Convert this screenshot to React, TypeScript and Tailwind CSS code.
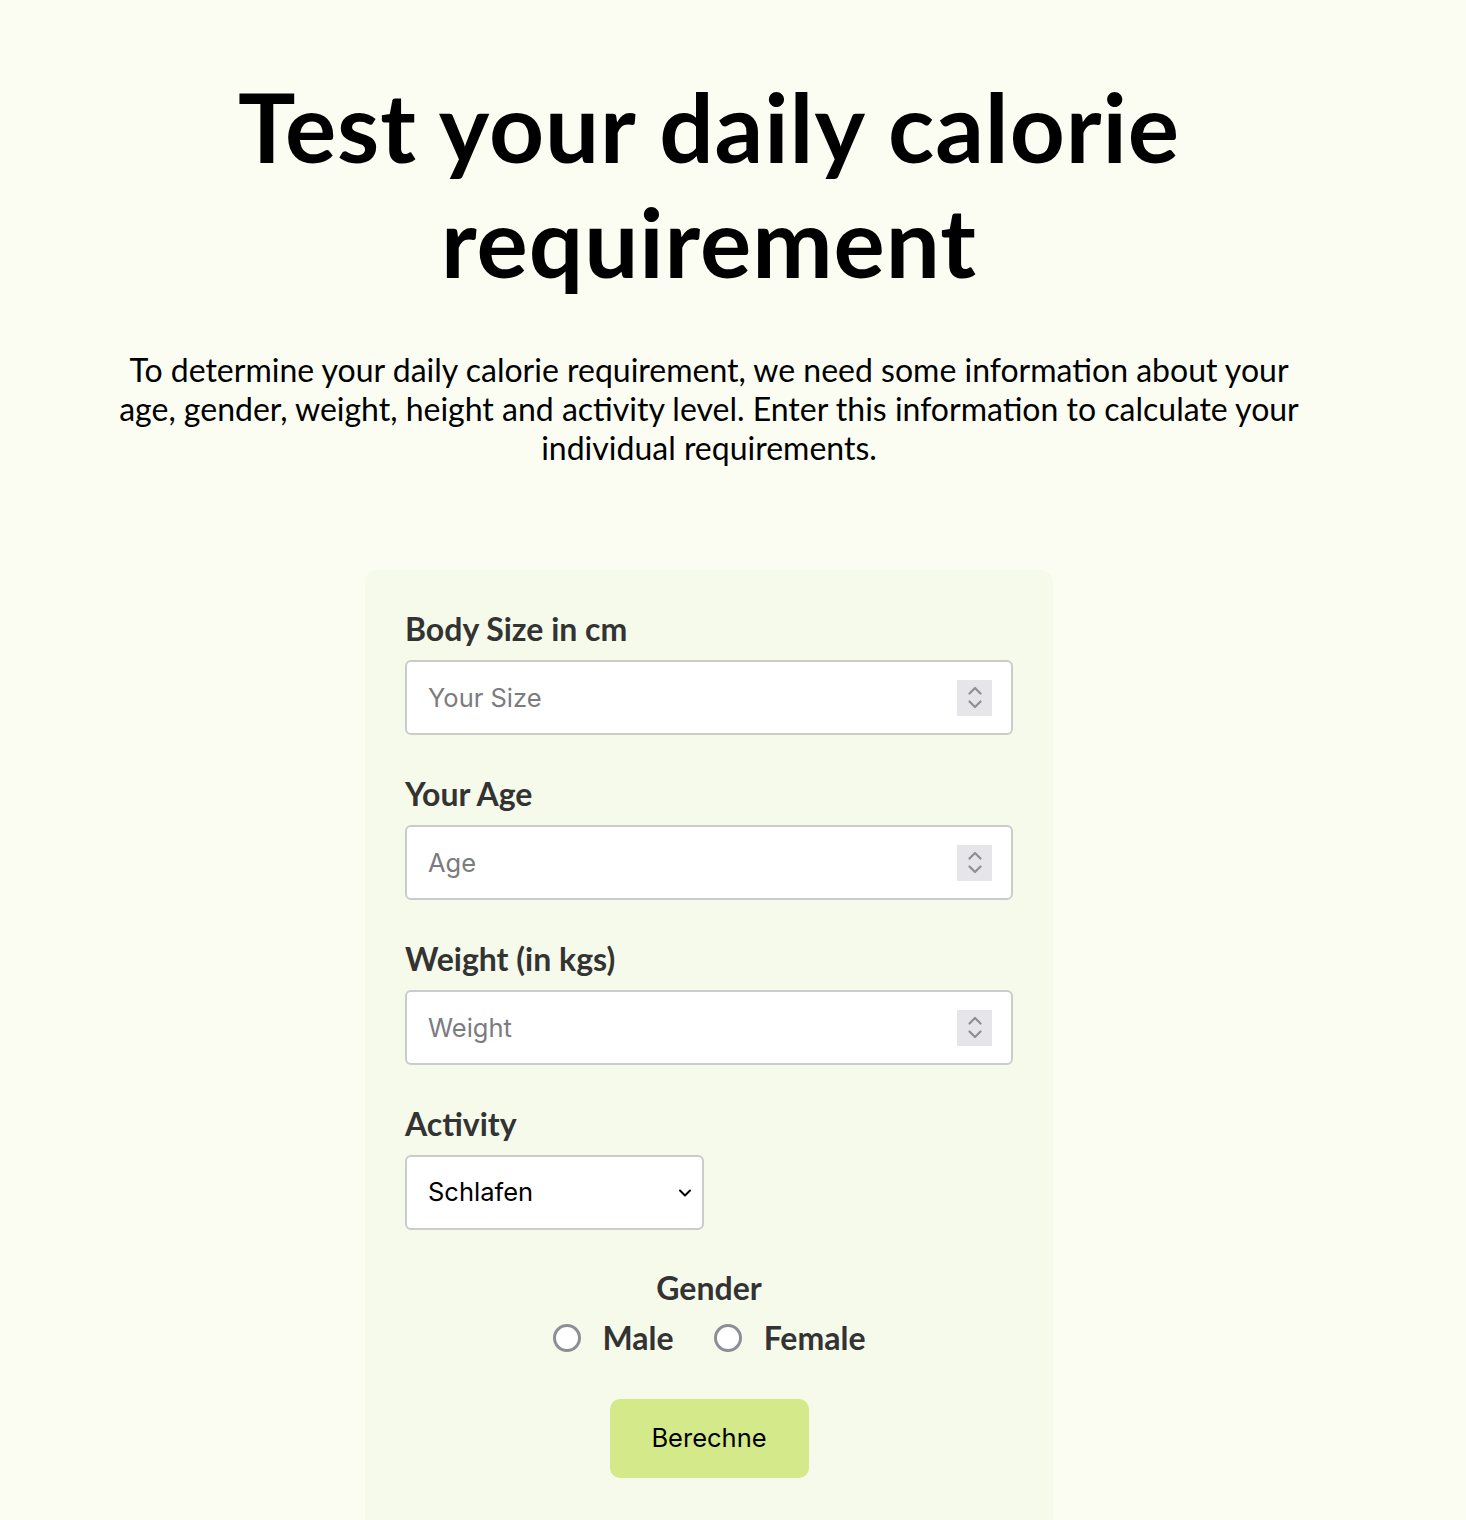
import React, { useState } from "react";

const headFont = { fontFamily: "Lato, 'Noto Sans', sans-serif" };

function Spinner() {
  return (
    <div className="pointer-events-none absolute right-[21px] top-1/2 flex h-[36px] w-[35px] -translate-y-1/2 flex-col items-center justify-center gap-[5px] bg-[#e6e6ea]">
      <svg width="16" height="9" viewBox="0 0 16 9" fill="none">
        <path d="M2.5 7.5 8 2l5.5 5.5" stroke="#8e8e93" strokeWidth="2.2" strokeLinecap="round" strokeLinejoin="round" />
      </svg>
      <svg width="16" height="9" viewBox="0 0 16 9" fill="none">
        <path d="M2.5 1.5 8 7l5.5-5.5" stroke="#8e8e93" strokeWidth="2.2" strokeLinecap="round" strokeLinejoin="round" />
      </svg>
    </div>
  );
}

function NumberField({ label, placeholder }: { label: string; placeholder: string }) {
  return (
    <div className="flex flex-col">
      <label className="mb-[12px] text-[32px] font-bold leading-[38px] text-[#333]" style={headFont}>
        {label}
      </label>
      <div className="relative">
        <input
          type="number"
          placeholder={placeholder}
          className="h-[75px] w-full rounded-[6px] border-2 border-[#cbcbcb] bg-white px-[21px] font-['Inter'] text-[25.5px] text-black outline-none placeholder:text-[#7b7b80] [appearance:textfield] [&::-webkit-inner-spin-button]:appearance-none [&::-webkit-outer-spin-button]:appearance-none"
        />
        <Spinner />
      </div>
    </div>
  );
}

export default function App() {
  const [gender, setGender] = useState("");

  return (
    <div className="min-h-[1520px] w-full bg-[#fbfdf3]">
      <div className="flex w-[1418px] flex-col items-center pt-[68px]">
        <h1 className="text-center text-[96px] font-bold leading-[115px] tracking-[0.01em] text-black" style={headFont}>
          Test your daily calorie
          <br />
          requirement
        </h1>
        <p className="mt-[52px] text-center text-[32px] leading-[39px] text-black" style={headFont}>
          To determine your daily calorie requirement, we need some information about your
          <br />
          age, gender, weight, height and activity level. Enter this information to calculate your
          <br />
          individual requirements.
        </p>

        <form
          className="mt-[103px] flex w-[688px] flex-col rounded-t-[12px] bg-[#f6faea] px-[40px] pb-[80px] pt-[40px]"
          onSubmit={(e) => e.preventDefault()}
        >
          <div className="flex flex-col gap-[40px]">
            <NumberField label="Body Size in cm" placeholder="Your Size" />
            <NumberField label="Your Age" placeholder="Age" />
            <NumberField label="Weight (in kgs)" placeholder="Weight" />
            <div className="flex flex-col">
              <label className="mb-[12px] text-[32px] font-bold leading-[38px] text-[#333]" style={headFont}>
                Activity
              </label>
              <div className="relative w-[299px]">
                <select className="h-[75px] w-full appearance-none rounded-[6px] border-2 border-[#cbcbcb] bg-white px-[21px] font-['Inter'] text-[25.5px] text-black outline-none">
                  <option>Schlafen</option>
                  <option>Sitzen</option>
                  <option>Stehen</option>
                  <option>Gehen</option>
                </select>
                <svg
                  className="pointer-events-none absolute right-[12px] top-1/2 -translate-y-1/2"
                  width="14"
                  height="9"
                  viewBox="0 0 14 9"
                  fill="none"
                >
                  <path d="M2 2l5 5 5-5" stroke="#000" strokeWidth="2" strokeLinecap="round" strokeLinejoin="round" />
                </svg>
              </div>
            </div>
          </div>

          <div className="mt-[39px] flex flex-col items-center">
            <span className="text-[32px] font-bold leading-[38px] text-[#333]" style={headFont}>
              Gender
            </span>
            <div className="mt-[12px] flex items-center gap-[40px]">
              {["Male", "Female"].map((g) => (
                <label key={g} className="flex items-center gap-[22px]">
                  <input
                    type="radio"
                    name="gender"
                    checked={gender === g}
                    onChange={() => setGender(g)}
                    className="h-[28px] w-[28px] appearance-none rounded-full border-[3px] border-[#8e8e96] bg-white checked:border-[8px]"
                  />
                  <span className="text-[32px] font-bold leading-[38px] text-[#333]" style={headFont}>
                    {g}
                  </span>
                </label>
              ))}
            </div>
            <button
              type="submit"
              className="mt-[42px] h-[79px] w-[199px] rounded-[10px] bg-[#d4ea8a] font-['Inter'] text-[25.5px] text-black"
            >
              Berechne
            </button>
          </div>
        </form>
      </div>
    </div>
  );
}
